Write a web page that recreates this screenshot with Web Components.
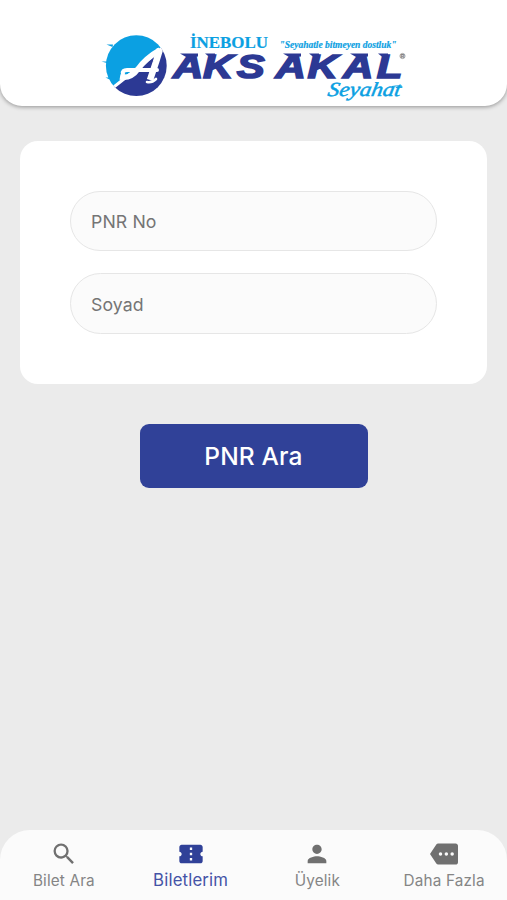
<!DOCTYPE html>
<html lang="tr"><head><meta charset="utf-8"><title>Biletlerim</title>
<style>html,body{margin:0;height:100%}body{background:#ebebeb;font-family:Inter,"Liberation Sans",sans-serif}</style></head>
<body>
<ticket-app>
  <app-header slot="header"><brand-logo></brand-logo></app-header>
  <form-card><text-field label="PNR No"></text-field><text-field label="Soyad"></text-field></form-card>
  <primary-button>PNR Ara</primary-button>
  <tab-bar slot="footer">
    <tab-item icon="search">Bilet Ara</tab-item>
    <tab-item icon="ticket" active>Biletlerim</tab-item>
    <tab-item icon="person">Üyelik</tab-item>
    <tab-item icon="more">Daha Fazla</tab-item>
  </tab-bar>
</ticket-app>
<script>
const define=(name,html)=>customElements.define(name,class extends HTMLElement{
  constructor(){super();this.attachShadow({mode:'open'}).innerHTML=typeof html==='function'?html(this):html}
});
define('ticket-app',`<style>:host{display:flex;flex-direction:column;height:900px;overflow:hidden;background:#ebebeb}
main{flex:1;display:flex;flex-direction:column;align-items:center;padding-top:34.500px;gap:40px}</style>
<slot name="header"></slot><main><slot></slot></main><slot name="footer"></slot>`);
define('app-header',`<style>:host{display:block;height:106px;background:#fff;border-radius:0 0 22px 22px;box-shadow:0 1px 4px rgba(0,0,0,.38)}</style><slot></slot>`);
define('brand-logo',`<style>:host{display:block;height:106px}svg{display:block}</style>
<svg width="507" height="106" viewBox="0 0 507 106">
<defs><clipPath id="disc"><circle cx="136.3" cy="65.7" r="30.4"/></clipPath></defs>
<g clip-path="url(#disc)"><path fill="#0ba0e2" d="M100 30h66v14L111 89h-11z"/><path fill="#2c3994" d="M111 89L166 44l8 2v54h-60z"/></g>
<path fill="#0ba0e2" d="M113 44.500h-6.500l6 2.500zM109 61.500h-7.500l7 2zM109 77.500h-3.500l4 2z"/>
<g clip-path="url(#disc)" fill="none" stroke="#fff" stroke-linejoin="round">
<path stroke-width="3" d="M110 90Q137 69 167 44"/>
<path stroke-width="5.500" d="M120 77Q131 79 138 69Q146 58 160 50"/>
<path stroke-width="4" stroke-linecap="round" d="M123 74Q122 70 127 70H157"/>
<path stroke-width="6.500" d="M160 49L156 62 150 80"/>
<path stroke-width="2.600" stroke-linecap="round" d="M147 82Q152 83 156 79"/></g>
<text x="190" y="47.500" fill="#0ba0e2" stroke="#0ba0e2" stroke-width=".2" font-family="Liberation Serif,serif" font-size="17.500" font-weight="700" textLength="78" lengthAdjust="spacingAndGlyphs">İNEBOLU</text>
<text x="279.500" y="47.500" fill="#0ba0e2" stroke="#0ba0e2" stroke-width=".2" font-family="Liberation Serif,serif" font-size="10.500" font-style="italic" font-weight="700" textLength="117" lengthAdjust="spacingAndGlyphs">"Seyahatle bitmeyen dostluk"</text>
<text transform="translate(0 77.500) scale(1.250 1)" x="138.500 162.500 189.500 220.500 246 274.500 301.500" y="0" fill="#2c3994" stroke="#2c3994" stroke-width="1.600" font-family="Liberation Sans,sans-serif" font-size="33.500" font-style="italic" font-weight="700">AKSAKAL</text>
<path fill="#2c3994" d="M180 53.500h18v3l-11 1zM205 53.500h10v3l-5 1zM283 53.500h18v3l-11 1zM309 53.500h10v3l-5 1zM350 53.500h18v3l-11 1zM378 53.500h10v3l-5 1z"/>
<circle cx="402.500" cy="56" r="2.600" fill="#ddd" stroke="#999" stroke-width=".8"/><text x="400.800" y="58" font-family="Liberation Sans,sans-serif" font-size="5" font-weight="700" fill="#777">R</text>
<text transform="translate(327 95.500) skewX(-10)" fill="#0ba0e2" stroke="#0ba0e2" stroke-width=".5" font-family="Liberation Serif,serif" font-size="20" font-style="italic" textLength="73" lengthAdjust="spacingAndGlyphs">Seyahat</text>
<path d="M392 86.500Q396 85.500 402 86" fill="none" stroke="#0ba0e2" stroke-width="1"/>
</svg>`);
define('form-card',`<style>:host{display:flex;flex-direction:column;gap:22px;box-sizing:border-box;width:467px;height:243.500px;padding:50px;background:#fff;border-radius:18px}</style><slot></slot>`);
define('text-field',el=>`<style>:host{display:flex;align-items:center;box-sizing:border-box;height:60.500px;border:1px solid #e6e6e6;border-radius:31px;background:#fbfbfb;padding:2px 20px 0;color:#757575;font-size:17.700px;letter-spacing:.1px}</style><span>${el.getAttribute('label')}</span>`);
define('primary-button',`<style>:host{display:block}button{display:block;width:228px;height:64px;padding:0;border:0;border-radius:9px;background:#304198;color:#fff;font:450 24.500px Inter,sans-serif;letter-spacing:.15px}</style><button><slot></slot></button>`);
define('tab-bar',`<style>:host{display:grid;grid-template-columns:repeat(4,1fr);height:70px;background:#fbfbfb;border-radius:30px 30px 0 0}</style><slot></slot>`);
const icons={
search:'M15.500 14h-.79l-.28-.27A6.471 6.471 0 0 0 16 9.500 6.500 6.500 0 1 0 9.500 16c1.610 0 3.090-.59 4.230-1.570l.27.28v.79l5 4.990L20.490 19l-4.990-5zm-6 0C7.010 14 5 11.990 5 9.500S7.010 5 9.500 5 14 7.010 14 9.500 11.990 14 9.500 14z',
ticket:'M22 10V6c0-1.110-.9-2-2-2H4c-1.100 0-1.990.89-1.990 2v4c1.100 0 1.990.9 1.990 2s-.89 2-2 2v4c0 1.100.9 2 2 2h16c1.100 0 2-.9 2-2v-4c-1.100 0-2-.9-2-2s.9-2 2-2zm-9 7.500h-2v-2h2v2zm0-4.500h-2v-2h2v2zm0-4.500h-2v-2h2v2z',
person:'M12 12c2.210 0 4-1.790 4-4s-1.790-4-4-4-4 1.790-4 4 1.790 4 4 4zm0 2c-2.670 0-8 1.340-8 4v2h16v-2c0-2.660-5.330-4-8-4z',
more:'M22 3H7c-.69 0-1.230.35-1.590.88L0 12l5.410 8.110c.36.53.9.89 1.590.89h15c1.100 0 2-.9 2-2V5c0-1.100-.9-2-2-2zM9 13.500a1.500 1.500 0 1 1 0-3 1.500 1.500 0 0 1 0 3zm5 0a1.500 1.500 0 1 1 0-3 1.500 1.500 0 0 1 0 3zm5 0a1.500 1.500 0 1 1 0-3 1.500 1.500 0 0 1 0 3z'};
define('tab-item',el=>`<style>:host{display:flex;flex-direction:column;align-items:center;padding:10px 0 0 1px;color:#707070;font-size:15.300px;letter-spacing:.15px}
:host([active]){color:#304198;font-size:16.800px;letter-spacing:.15px}svg{display:block;flex:none}span{line-height:26px;color:#858585;white-space:nowrap}:host([active]) span{color:#4453a6;line-height:24px}</style>
<svg width="28" height="28" viewBox="0 0 24 24" fill="currentColor" fill-rule="evenodd"><path d="${icons[el.getAttribute('icon')]}"/></svg><span><slot></slot></span>`);
</script></body></html>
